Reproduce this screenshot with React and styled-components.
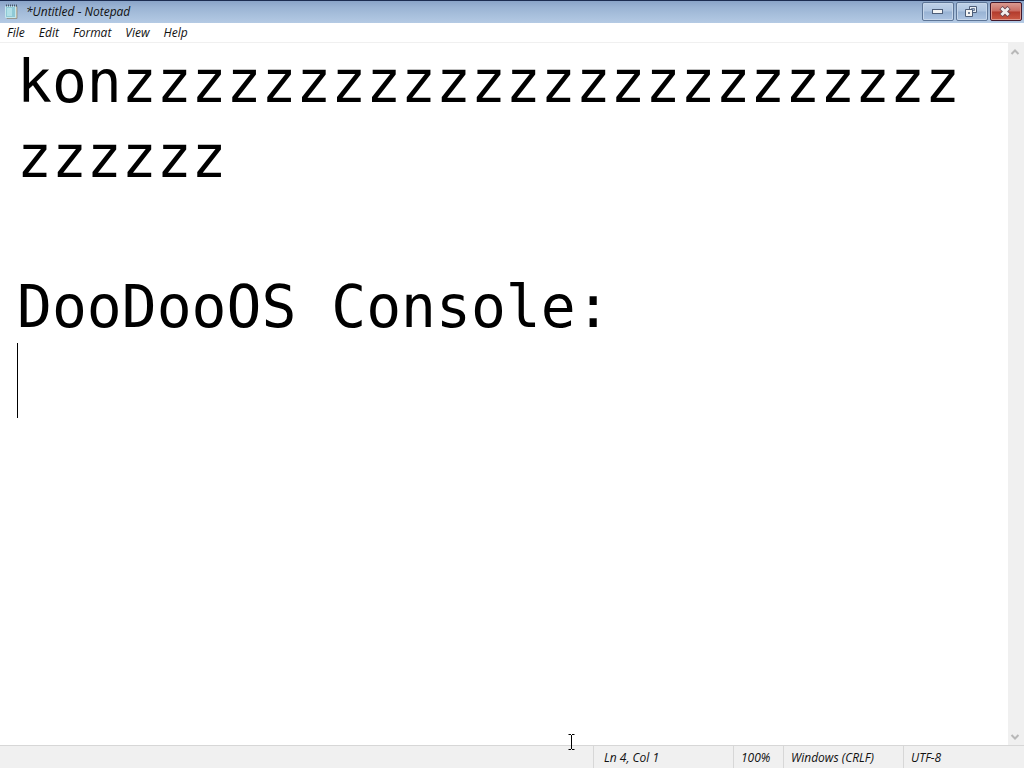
import React from "react";
import styled, { createGlobalStyle } from "styled-components";

const GlobalStyle = createGlobalStyle`
  * { box-sizing: border-box; }
  body { margin: 0; background: #fff; }
`;

const Window = styled.div`
  display: flex;
  flex-direction: column;
  height: 100vh;
  background: #fff;
  color: #111;
  font: italic 12px/18px "Open Sans", "Noto Sans", sans-serif;
`;

const TitleBar = styled.header`
  display: flex;
  align-items: center;
  flex: none;
  height: 23px;
  padding-left: 4px;
  border-top: 1px solid #1c2c50;
  background: linear-gradient(#8aa4c8, #9bb4d4 30%, #a6bedb 60%, #b4cae4);
`;

const Title = styled.h1`
  flex: 1;
  margin: 0 0 0 7px;
  font: inherit;
`;

const Controls = styled.div`
  display: flex;
  gap: 2px;
  padding-right: 2px;
  height: 20px;
`;

const ControlButton = styled.button`
  display: grid;
  place-items: center;
  width: 32px;
  height: 19px;
  padding: 0;
  border: 1px solid ${(p) => (p.$close ? "#43182a" : "#5d7597")};
  border-radius: 2px;
  background: ${(p) =>
    p.$close
      ? "linear-gradient(#d99a92, #c96a5f 48%, #b23a2c 52%, #cb5a45)"
      : "linear-gradient(#bfd1e8, #aec4e0 48%, #98b2d3 52%, #adc4e2)"};
  box-shadow: inset 0 0 0 1px ${(p) => (p.$close ? "#dc958a" : "#c6d6ea")};
`;

const MenuBar = styled.nav`
  display: flex;
  flex: none;
  height: 20px;
  border-bottom: 1px solid #f0f0f0;
`;

const MenuButton = styled.button`
  height: 19px;
  padding: 0 7px;
  border: 0;
  background: none;
  color: inherit;
  font: inherit;
`;

const Workspace = styled.main`
  display: flex;
  flex: 1;
  min-height: 0;
`;

const Page = styled.div`
  position: relative;
  display: flex;
  flex: 1;
`;

const Editor = styled.textarea`
  flex: 1;
  min-width: 0;
  padding: 2px 30px 0 17px;
  border: 0;
  outline: 0;
  resize: none;
  overflow: hidden;
  background: #fff;
  color: #000;
  font: 58px/75px "DejaVu Sans Mono", "Liberation Mono", monospace;
  word-break: break-all;
`;

const Caret = styled.span`
  position: absolute;
  left: 17px;
  top: 300px;
  width: 1px;
  height: 75px;
  background: #000;
`;

const Pointer = styled.svg`
  position: absolute;
  left: 568px;
  bottom: -5px;
`;

const ScrollBar = styled.div`
  display: flex;
  flex-direction: column;
  justify-content: space-between;
  width: 16px;
  background: #f0f0f0;
`;

const ScrollButton = styled.button`
  display: grid;
  place-items: center;
  height: 17px;
  padding: 0 2px 0 0;
  border: 0;
  background: none;
`;

const StatusBar = styled.footer`
  display: grid;
  grid-template-columns: 1fr 140px 50px 120px 121px;
  flex: none;
  height: 23px;
  border-top: 1px solid #d7d7d7;
  background: #f0f0f0;
`;

const StatusCell = styled.div`
  padding: 3px 0 0 ${(p) => (p.$wide ? "10px" : "7px")};
  border-left: 1px solid ${(p) => (p.$first ? "transparent" : "#d7d7d7")};
  white-space: nowrap;
`;

const documentText = `kon${"z".repeat(30)}

DooDooOS Console:
`;

const NotepadIcon = () => (
  <svg width="15" height="16" viewBox="0 0 15 16" aria-hidden="true">
    <path d="M3 2.5H13V14.5H3Z" fill="#d9d2b8" stroke="#8b8a82" strokeWidth=".8" />
    <path d="M1.5 2.5H11.5V13.5H1.5Z" fill="#8fc9d6" stroke="#c5e6ec" />
    <path d="M3 4H8V12H3Z" fill="#b0dfe7" />
    <path d="M2 1.5H13" stroke="#46596b" strokeWidth="2" strokeDasharray="1 1" />
  </svg>
);

const Chevron = ({ down }) => (
  <svg width="10" height="8" viewBox="0 0 10 8" aria-hidden="true">
    <path d={down ? "M1.5 2L5 5.5L8.5 2" : "M1.5 6L5 2.5L8.5 6"} fill="none" stroke="#b8b8b8" strokeWidth="2" />
  </svg>
);

export default function App() {
  return (
    <Window>
      <GlobalStyle />
      <TitleBar>
        <NotepadIcon />
        <Title>*Untitled - Notepad</Title>
        <Controls>
          <ControlButton aria-label="Minimize">
            <svg width="12" height="7" viewBox="0 0 12 7">
              <rect x=".5" y="1.5" width="10" height="4" fill="#f4f4f4" stroke="#4d5d78" />
            </svg>
          </ControlButton>
          <ControlButton aria-label="Restore">
            <svg width="14" height="11" viewBox="0 0 14 11">
              <path d="M4.5.5H11.5V6.5H4.5Z" fill="#e8edf4" stroke="#4d5d78" />
              <path d="M6.5 2.5H9.5V4.5H6.5Z" fill="#9eb8da" stroke="#4d5d78" strokeWidth=".7" />
              <path d="M.5 3.5H7.5V10.5H.5Z" fill="#f4f4f4" stroke="#4d5d78" />
              <path d="M3.5 6.5H4.5V7.5H3.5Z" fill="#9eb8da" stroke="#4d5d78" />
            </svg>
          </ControlButton>
          <ControlButton $close aria-label="Close">
            <svg width="14" height="11" viewBox="0 0 14 11">
              <path d="M2 1.5L10 9.5M10 1.5L2 9.5" stroke="#6b4650" strokeWidth="4.6" />
              <path d="M2.5 2L9.5 9M9.5 2L2.5 9" stroke="#f2eeee" strokeWidth="3" />
            </svg>
          </ControlButton>
        </Controls>
      </TitleBar>
      <MenuBar aria-label="Menu">
        {["File", "Edit", "Format", "View", "Help"].map((label) => (
          <MenuButton key={label}>{label}</MenuButton>
        ))}
      </MenuBar>
      <Workspace>
        <Page>
          <Editor aria-label="Document" spellCheck={false} defaultValue={documentText} />
          <Caret />
          <Pointer width="8" height="16" viewBox="0 0 8 16" aria-hidden="true">
            <path d="M.5.5H3M4 .5H6.5M3.5 1V15M.5 15.5H3M4 15.5H6.5" fill="none" stroke="#000" />
          </Pointer>
        </Page>
        <ScrollBar>
          <ScrollButton aria-label="Scroll up"><Chevron /></ScrollButton>
          <ScrollButton aria-label="Scroll down"><Chevron down /></ScrollButton>
        </ScrollBar>
      </Workspace>
      <StatusBar>
        <StatusCell $first />
        <StatusCell $wide>Ln 4, Col 1</StatusCell>
        <StatusCell>100%</StatusCell>
        <StatusCell>Windows (CRLF)</StatusCell>
        <StatusCell>UTF-8</StatusCell>
      </StatusBar>
    </Window>
  );
}
